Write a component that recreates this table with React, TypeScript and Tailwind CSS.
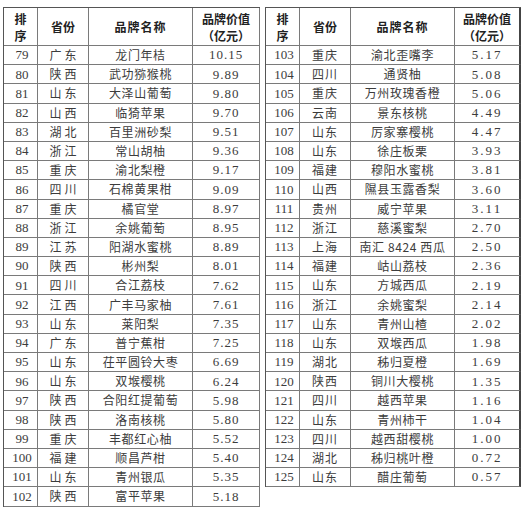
type Row = [string, string, string, string];

const left: Row[] = [
  ["79", "广东", "龙门年桔", "10.15"],
  ["80", "陕西", "武功猕猴桃", "9.89"],
  ["81", "山东", "大泽山葡萄", "9.80"],
  ["82", "山西", "临猗苹果", "9.70"],
  ["83", "湖北", "百里洲砂梨", "9.51"],
  ["84", "浙江", "常山胡柚", "9.36"],
  ["85", "重庆", "渝北梨橙", "9.17"],
  ["86", "四川", "石棉黄果柑", "9.09"],
  ["87", "重庆", "橘官堂", "8.97"],
  ["88", "浙江", "余姚葡萄", "8.95"],
  ["89", "江苏", "阳湖水蜜桃", "8.89"],
  ["90", "陕西", "彬州梨", "8.01"],
  ["91", "四川", "合江荔枝", "7.62"],
  ["92", "江西", "广丰马家柚", "7.61"],
  ["93", "山东", "莱阳梨", "7.35"],
  ["94", "广东", "普宁蕉柑", "7.25"],
  ["95", "山东", "茌平圆铃大枣", "6.69"],
  ["96", "山东", "双堠樱桃", "6.24"],
  ["97", "陕西", "合阳红提葡萄", "5.98"],
  ["98", "陕西", "洛南核桃", "5.80"],
  ["99", "重庆", "丰都红心柚", "5.52"],
  ["100", "福建", "顺昌芦柑", "5.40"],
  ["101", "山东", "青州银瓜", "5.35"],
  ["102", "陕西", "富平苹果", "5.18"],
];

const right: Row[] = [
  ["103", "重庆", "渝北歪嘴李", "5.17"],
  ["104", "四川", "通贤柚", "5.08"],
  ["105", "重庆", "万州玫瑰香橙", "5.06"],
  ["106", "云南", "景东核桃", "4.49"],
  ["107", "山东", "厉家寨樱桃", "4.47"],
  ["108", "山东", "徐庄板栗", "3.93"],
  ["109", "福建", "穆阳水蜜桃", "3.81"],
  ["110", "山西", "隰县玉露香梨", "3.60"],
  ["111", "贵州", "威宁苹果", "3.11"],
  ["112", "浙江", "慈溪蜜梨", "2.70"],
  ["113", "上海", "南汇 8424 西瓜", "2.50"],
  ["114", "福建", "岵山荔枝", "2.36"],
  ["115", "山东", "方城西瓜", "2.19"],
  ["116", "浙江", "余姚蜜梨", "2.14"],
  ["117", "山东", "青州山楂", "2.02"],
  ["118", "山东", "双堠西瓜", "1.98"],
  ["119", "湖北", "秭归夏橙", "1.69"],
  ["120", "陕西", "铜川大樱桃", "1.35"],
  ["121", "四川", "越西苹果", "1.16"],
  ["122", "山东", "青州柿干", "1.04"],
  ["123", "四川", "越西甜樱桃", "1.00"],
  ["124", "湖北", "秭归桃叶橙", "0.72"],
  ["125", "山东", "醋庄葡萄", "0.57"],
];

const cjk = "font-['Noto_Sans_CJK_SC',sans-serif]";
const serif = "font-['Liberation_Serif','Noto_Sans_CJK_SC',serif]";
const cell = "flex items-center justify-center border-r border-b border-[#7a7a7a]";

function PriceTable({ rows, side }: { rows: Row[]; side: "left" | "right" }) {
  const isRight = side === "right";
  const lastW = isRight ? "w-[66px] border-r-2 border-r-[#444]" : "w-[67px]";
  return (
    <div className="flex flex-col border-l border-t border-[#555] w-fit">
      {/* 表头 */}
      <div className={`flex h-[38px] ${cjk} font-bold text-[12px] leading-[17px] text-[#222]`}>
        <div className={`${cell} w-[34px] flex-col`}>
          <span className="block">排</span>
          <span className="block">序</span>
        </div>
        <div className={`${cell} w-[51px]`}>省份</div>
        <div className={`${cell} w-[104px] tracking-[1px]`}>品牌名称</div>
        <div className={`${cell} ${lastW} flex-col`}>
          <span className="block">品牌价值</span>
          <span className="block">（亿元）</span>
        </div>
      </div>
      {rows.map((r) => (
        <div key={r[0]} className="flex h-[19.2px] text-[#3c3c3c]">
          <div className={`${cell} w-[34px] ${serif} text-[13px] pl-[3px]`}>{r[0]}</div>
          <div
            className={`${cell} w-[51px] ${cjk} text-[12px] ${
              isRight ? "tracking-[1px]" : "tracking-[3px] pl-[3px]"
            }`}
          >
            {r[1]}
          </div>
          <div className={`${cell} w-[104px] ${cjk} text-[12px] tracking-[0.6px]`}>{r[2]}</div>
          <div
            className={`${cell} ${lastW} ${serif} text-[13px] ${
              isRight ? "tracking-[2px]" : "tracking-[1px]"
            }`}
          >
            {r[3]}
          </div>
        </div>
      ))}
    </div>
  );
}

export default function App() {
  return (
    <div className="w-[524px] h-[508px] bg-white overflow-hidden">
      <div className="flex items-start gap-[5px] pl-[3px] pt-[7px]">
        <PriceTable rows={left} side="left" />
        <PriceTable rows={right} side="right" />
      </div>
    </div>
  );
}
